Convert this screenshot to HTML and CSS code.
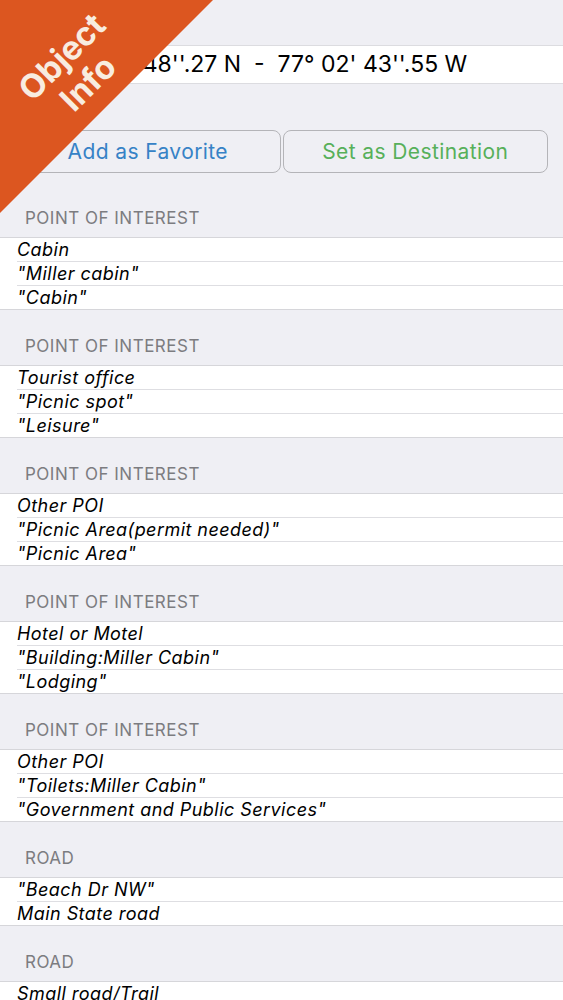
FILE: index.html
```html
<!DOCTYPE html>
<html>
<head>
    <title>Object Info</title>
    <link rel="stylesheet" href="styles.css">
</head>
<body>
    <div class="ribbon">
        <div class="ribbon-text">Object<br>Info</div>
    </div>

    <div class="coords">38° 56' 48''.27 N&nbsp; - &nbsp;77° 02' 43''.55 W</div>

    <div class="actions">
        <button class="btn fav">Add as Favorite</button>
        <button class="btn dest">Set as Destination</button>
    </div>

    <div class="section first">
        <div class="section-title">POINT OF INTEREST</div>
        <div class="group">
            <div class="row">Cabin</div>
            <div class="row">"Miller cabin"</div>
            <div class="row">"Cabin"</div>
        </div>
    </div>
    <div class="section">
        <div class="section-title">POINT OF INTEREST</div>
        <div class="group">
            <div class="row">Tourist office</div>
            <div class="row">"Picnic spot"</div>
            <div class="row">"Leisure"</div>
        </div>
    </div>
    <div class="section">
        <div class="section-title">POINT OF INTEREST</div>
        <div class="group">
            <div class="row">Other POI</div>
            <div class="row">"Picnic Area(permit needed)"</div>
            <div class="row">"Picnic Area"</div>
        </div>
    </div>
    <div class="section">
        <div class="section-title">POINT OF INTEREST</div>
        <div class="group">
            <div class="row">Hotel or Motel</div>
            <div class="row">"Building:Miller Cabin"</div>
            <div class="row">"Lodging"</div>
        </div>
    </div>
    <div class="section">
        <div class="section-title">POINT OF INTEREST</div>
        <div class="group">
            <div class="row">Other POI</div>
            <div class="row">"Toilets:Miller Cabin"</div>
            <div class="row">"Government and Public Services"</div>
        </div>
    </div>
    <div class="section">
        <div class="section-title">ROAD</div>
        <div class="group">
            <div class="row">"Beach Dr NW"</div>
            <div class="row">Main State road</div>
        </div>
    </div>
    <div class="section">
        <div class="section-title">ROAD</div>
        <div class="group">
            <div class="row">Small road/Trail</div>
        </div>
    </div>
</body>
</html>
```

FILE: styles.css
```css
body {
    margin: 0;
    background: #efeff4;
    font-family: Inter, "Liberation Sans", Arial, sans-serif;
    color: #000;
    overflow: hidden;
}
.ribbon {
    position: absolute;
    left: 0;
    top: 0;
    width: 213px;
    height: 213px;
    background: #dc5620;
    clip-path: polygon(0 0, 100% 0, 0 100%);
    z-index: 2;
}
.ribbon-text {
    position: absolute;
    left: 75px;
    top: 70px;
    transform: translate(-50%, -50%) rotate(-45deg);
    color: #f8ece0;
    font-weight: bold;
    font-size: 33px;
    line-height: 37px;
    text-align: center;
    white-space: nowrap;
}
.coords {
    margin-top: 45px;
    height: 37px;
    background: #fff;
    border-top: 1px solid #dcdce0;
    border-bottom: 1px solid #dcdce0;
    font-size: 23px;
    line-height: 37px;
    padding-left: 56px;
    white-space: nowrap;
}
.actions {
    display: flex;
    gap: 2px;
    padding: 0 15px;
    margin-top: 46px;
}
.btn {
    flex: 1;
    height: 43px;
    background: transparent;
    border: 1px solid #b4b4b8;
    border-radius: 8px;
    font-family: inherit;
    font-size: 21px;
    letter-spacing: 0.4px;
}
.fav {
    color: #3682c6;
}
.dest {
    color: #57b05a;
}
.section-title {
    height: 29px;
    padding: 26px 0 0 25px;
    font-size: 17px;
    line-height: 20px;
    letter-spacing: 0.5px;
    color: #7c7c80;
}
.first .section-title {
    padding-top: 35px;
}
.group {
    background: #fff;
    border-top: 1px solid #d6d6da;
    border-bottom: 1px solid #d6d6da;
}
.row {
    height: 23px;
    line-height: 23px;
    margin-left: 17px;
    font-size: 18px;
    letter-spacing: 0.45px;
    font-style: italic;
    white-space: nowrap;
}
.row + .row {
    border-top: 1px solid #dedee2;
}
```
